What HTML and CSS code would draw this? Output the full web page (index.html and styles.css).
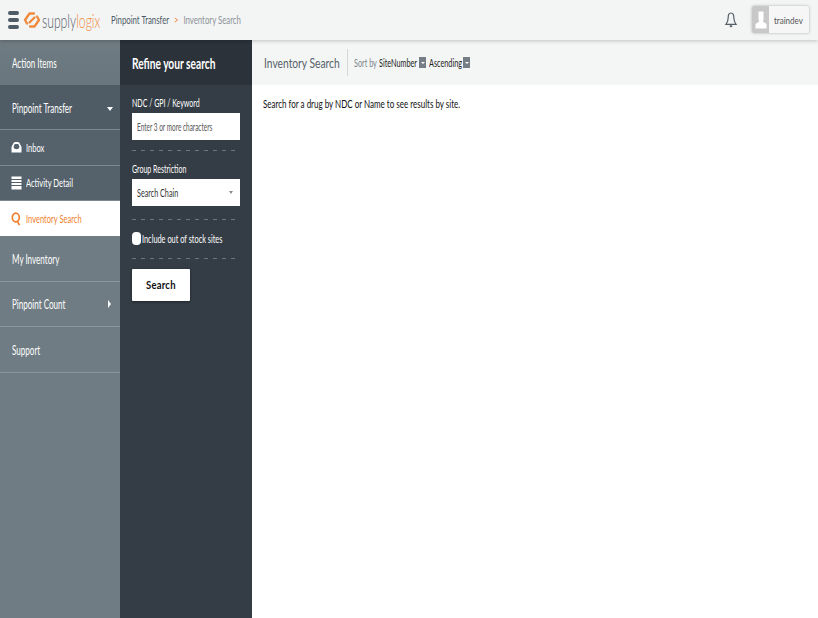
FILE: index.html
```html
<!DOCTYPE html>
<html lang="en">
<head>
<meta charset="utf-8">
<title>Inventory Search</title>
<link rel="stylesheet" href="styles.css">
</head>
<body>
<header class="topbar">
  <div class="burger"><span></span><span></span><span></span></div>
  <svg class="logo" width="18" height="18" viewBox="0 0 18 18" fill="none" stroke="#f08a3c" stroke-width="2.300" stroke-linecap="round" stroke-linejoin="round"><path d="M11 2.500H6.500L2 9 4 12.500"/><path d="M7 15.500H11.500L16 9 14 5.500"/><path d="M11.500 6.500 6.500 11.500"/></svg>
  <div class="brand"><span class="brand-text"><span class="brand-a">supply</span><span class="brand-b">logix</span></span></div>
  <nav class="crumbs"><span class="crumb-a">Pinpoint Transfer</span><span class="crumb-sep">&gt;</span><span class="crumb-b">Inventory Search</span></nav>
  <svg class="bell" width="14" height="18" viewBox="0 0 14 18" fill="none" stroke="#555e66" stroke-width="1.200"><path d="M7 2C4.800 2 4.200 4 4.200 6.500 4.200 9.500 3.400 11.600 2 13.300H12C10.600 11.600 9.800 9.500 9.800 6.500 9.800 4 9.200 2 7 2Z"/><path d="M5.800 15.200H8.200" stroke-width="1.800"/></svg>
  <div class="user">
    <div class="avatar"><svg width="12" height="18" viewBox="0 0 12 18" fill="#fff"><path d="M3.500 0.500H8.500V8.500L7.800 10.500 11.500 13V17.500H0.500V13L4.200 10.500 3.500 8.500Z"/></svg></div>
    <span class="user-name">traindev</span>
  </div>
</header>
<div class="body">
  <aside class="nav">
    <a class="nav-row top first"><span class="sq">Action Items</span></a>
    <a class="nav-row top open"><span class="sq">Pinpoint Transfer</span><i class="caret-down"></i></a>
    <a class="nav-row sub"><svg class="nav-ico" width="11" height="12" viewBox="0 0 11 12"><path fill="#fff" fill-rule="evenodd" d="M0.500 11.500V6L2.500 2Q3 1 4.500 1H6.500Q8 1 8.500 2L10.500 6V11.500ZM2.500 6Q3 8.300 5.500 8.300T8.500 6L7.300 3H3.700Z"/></svg><span class="sq sq-sub">Inbox</span></a>
    <a class="nav-row sub"><svg class="nav-ico" width="11" height="14" viewBox="0 0 11 14"><path fill="#fff" d="M0.500 0.500H10.500V3H0.500ZM0.500 4H10.500V6H0.500ZM0.500 7H10.500V9H0.500ZM0.500 10H10.500V13.500H0.500Z"/></svg><span class="sq sq-sub">Activity Detail</span></a>
    <a class="nav-row sub active"><svg class="nav-ico" width="11" height="14" viewBox="0 0 11 14" fill="none" stroke="#f07f2e" stroke-width="1.700"><ellipse cx="4.800" cy="5.500" rx="3.500" ry="4.300"/><path d="M6.300 9.300 8.500 13.200"/></svg><span class="sq sq-sub">Inventory Search</span></a>
    <a class="nav-row top"><span class="sq">My Inventory</span></a>
    <a class="nav-row top"><span class="sq">Pinpoint Count</span><i class="caret-right"></i></a>
    <a class="nav-row top"><span class="sq">Support</span></a>
  </aside>
  <section class="refine">
    <h2 class="refine-title"><span class="sq sq-title">Refine your search</span></h2>
    <form class="refine-form">
      <label class="field-label"><span class="sq sq-label">NDC / GPI / Keyword</span></label>
      <div class="input ph"><span class="sq sq-ph">Enter 3 or more characters</span></div>
      <div class="dash dash-a"></div>
      <label class="field-label"><span class="sq sq-label">Group Restriction</span></label>
      <div class="input select"><span class="sq sq-sel">Search Chain</span><i class="select-caret"></i></div>
      <div class="dash dash-b"></div>
      <div class="check-row"><i class="check"></i><span class="sq sq-check">Include out of stock sites</span></div>
      <div class="dash dash-c"></div>
      <button class="search-btn" type="button"><span class="sq sq-btn">Search</span></button>
    </form>
  </section>
  <main class="main">
    <div class="main-head">
      <h1 class="main-title"><span class="sq sq-main">Inventory Search</span></h1>
      <div class="sort">
        <span class="sort-item w-sort"><span class="sq sq-sort sort-label">Sort by</span></span>
        <span class="sort-item w-site"><span class="sq sq-sort">SiteNumber</span></span><i class="sort-btn"></i>
        <span class="sort-item w-asc"><span class="sq sq-sort">Ascending</span></span><i class="sort-btn"></i>
      </div>
    </div>
    <p class="hint"><span class="sq sq-hint">Search for a drug by NDC or Name to see results by site.</span></p>
  </main>
</div>
</body>
</html>
```
FILE: styles.css
```css
* { box-sizing: border-box; }
html, body { margin: 0; height: 100%; overflow: hidden; }
body { font-family: Lato, "Open Sans", sans-serif; font-size: 11px; color: #222; background: #fff; display: flex; flex-direction: column; width: 818px; height: 618px; }

/* The reference's type is horizontally condensed; each label is scaled along x only. */
.sq { display: inline-block; white-space: nowrap; transform-origin: 0 50%; transform: scaleX(.62); }
.sq-sub { transform: scaleX(.685); }
.sq-title { transform: scaleX(.68); }
.sq-label { transform: scaleX(.61); }
.sq-ph { transform: scaleX(.615); }
.sq-sel { transform: scaleX(.655); }
.sq-check { transform: scaleX(.67); }
.sq-main { transform: scaleX(.733); }
.sq-sort { transform: scaleX(.66); }
.sq-hint { transform: scaleX(.667); }
.sq-btn { transform-origin: 50% 50%; transform: scaleX(.79); }

.topbar { height: 40px; flex: none; display: flex; align-items: center; background: #f3f4f4; padding: 0 9px 1px 8px; box-shadow: 0 1px 4px rgba(0,0,0,.22); position: relative; z-index: 2; }
.burger { display: flex; flex-direction: column; gap: 3px; width: 11px; margin-right: 4px; flex: none; }
.burger span { display: block; height: 4px; background: #4e5b66; border-radius: 2px; }
.logo { margin-right: 1px; flex: none; }
.brand { font-size: 20px; line-height: 24px; margin-right: 9px; width: 60px; flex: none; }
.brand-text { display: inline-block; white-space: nowrap; transform-origin: 0 50%; transform: scaleX(.61); }
.brand-a { color: #56616a; font-weight: 300; }
.brand-b { color: #f08a3c; font-weight: 300; }
.crumbs { display: flex; align-items: center; font-size: 12px; white-space: nowrap; transform-origin: 0 50%; transform: scaleX(.65); }
.crumb-a { color: #4c5a66; }
.crumb-sep { color: #f08a3c; margin: 0 7.500px; }
.crumb-b { color: #8b9399; }
.bell { margin-left: auto; margin-right: 14px; flex: none; }
.user { display: flex; align-items: center; height: 27px; width: 57px; background: #f6f6f6; box-shadow: 0 0 3px rgba(0,0,0,.3); border-radius: 2px; flex: none; }
.avatar { width: 17px; height: 27px; flex: none; background: #c8c8c8; display: flex; align-items: flex-end; justify-content: center; padding-bottom: 4px; border-radius: 2px 0 0 2px; }
.user-name { font-size: 10px; color: #555; margin-left: 4.500px; white-space: nowrap; transform-origin: 0 50%; transform: scaleX(.8); }

.body { flex: 1; display: flex; min-height: 0; }

.nav { width: 120px; flex: none; background: #6f7c83; display: flex; flex-direction: column; }
.nav-row { display: flex; align-items: center; color: #fff; position: relative; font-size: 13px; padding-left: 12px; border-bottom: 1px solid #8b969c; }
.top { height: 45.500px; padding-top: 1px; }
.first { background: linear-gradient(#6f7b82, #6a767d); height: 45px; border-bottom: 0; padding-top: 0; }
.open { background: #4f5c66; height: 45px; border-bottom: 1px solid #7d8890; }
.sub { height: 35.500px; background: #55626c; font-size: 11px; padding-left: 11px; border-bottom: 1px solid #7d8890; }
.active { background: #fff; color: #f07f2e; border-bottom: 0; height: 35px; }
.nav-ico { margin-right: 4px; flex: none; }
.caret-down { position: absolute; right: 7px; top: 22px; border: 3px solid transparent; border-top: 4px solid #fff; border-bottom: 0; }
.caret-right { position: absolute; right: 9px; top: 18px; border: 4px solid transparent; border-left: 3px solid #fff; border-right: 0; }

.refine { width: 132px; flex: none; background: #343c45; color: #fff; }
.refine-title { margin: 0; height: 45px; background: #2b323a; display: flex; align-items: center; padding-left: 12px; font-size: 15px; font-weight: 700; }
.refine-form { display: flex; flex-direction: column; padding: 11px 12px 0; }
.field-label { font-size: 11.500px; line-height: 14px; margin-bottom: 3px; display: block; }
.input { width: 108px; height: 27px; background: #fff; color: #333; display: flex; align-items: center; padding-left: 5px; font-size: 11px; position: relative; overflow: hidden; }
.ph { font-size: 10.500px; color: #555; }
.select-caret { position: absolute; right: 7px; top: 12px; border: 2.500px solid transparent; border-top: 3px solid #8b8b8b; border-bottom: 0; }
.dash { height: 1px; flex: none; background: repeating-linear-gradient(90deg, #6d747b 0 4px, transparent 4px 9px); }
.dash-a { margin: 10px 0 11px; }
.dash-b { margin: 13px 0 11px; }
.dash-c { margin: 12px 0 10px; }
.check-row { display: flex; align-items: center; height: 15px; font-size: 11px; }
.check { width: 9px; height: 13px; background: #fff; border-radius: 4px; margin-right: 1px; flex: none; }
.search-btn { width: 58px; height: 32px; border: 0; background: #fff; color: #111; font: 700 12px Lato, sans-serif; letter-spacing: .3px; border-radius: 1px; box-shadow: 0 1px 3px rgba(0,0,0,.4); padding: 0 0 2px; }

.main { flex: 1; min-width: 0; }
.main-head { height: 45px; background: #f4f6f5; display: flex; align-items: center; padding-left: 12px; }
.main-title { margin: 0; font-size: 14px; font-weight: 400; color: #56616a; width: 84px; height: 27px; line-height: 27px; border-right: 1px solid #d5d8d8; flex: none; }
.sort { display: flex; align-items: center; margin-left: 6px; font-size: 11px; }
.sort-item { display: block; white-space: nowrap; color: #222; }
.w-sort { width: 25px; }
.w-site { width: 40px; }
.w-asc { width: 34px; }
.sort-label { color: #7a848b; }
.sort-btn { width: 7px; height: 11px; background: #757d85; margin-right: 3px; position: relative; flex: none; }
.sort-btn::after { content: ""; position: absolute; left: 1.500px; top: 4.500px; border: 2px solid transparent; border-top: 2px solid #fff; border-bottom: 0; }
.hint { margin: 11px 0 0 11px; font-size: 12px; line-height: 15px; color: #111; }
```
